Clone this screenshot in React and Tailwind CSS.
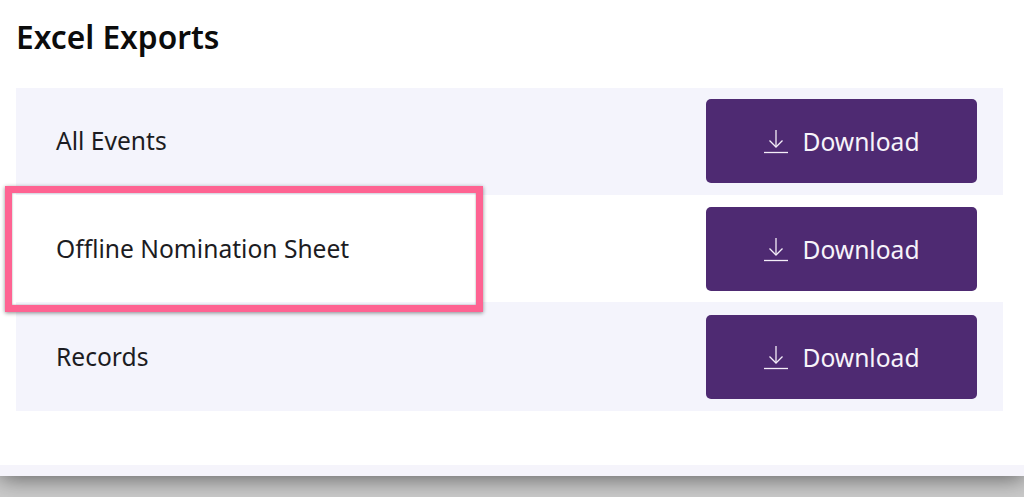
import React from 'react';

const rows = [
  { label: 'All Events', rowClass: 'bg-[#f4f4fc] pt-[11px] pb-3' },
  { label: 'Offline Nomination Sheet', rowClass: 'bg-white pt-3 pb-[11px]' },
  { label: 'Records', rowClass: 'bg-[#f4f4fc] pt-[13px] pb-3' },
];

const DownloadIcon = () => (
  <svg width="26" height="26" viewBox="0 0 26 26" fill="none" stroke="#f4eef8" strokeWidth="1.3" className="shrink-0">
    <path d="M13 2v17" />
    <path d="M6.5 12.5 13 19l6.5-6.5" />
    <path d="M1 24.5h24" />
  </svg>
);

const App = () => {
  return (
    <div className="relative h-[497px] w-[1024px] overflow-hidden bg-[#cbcbcb] font-['Noto_Sans',sans-serif]">
      {/* Page panel */}
      <div className="h-[476px] bg-white shadow-[0_2px_22px_rgba(0,0,0,0.55)] flex flex-col">
        <h1 className="pl-[16px] pt-[15px] h-[88px] text-[31.7px] leading-[44px] font-semibold text-[#0c0c0c]">Excel Exports</h1>

        <div className="ml-4 w-[987px]">
          {rows.map((row) => (
            <div key={row.label} className={`flex items-center justify-between pl-10 pr-[26px] ${row.rowClass}`}>
              <span className="text-[24.6px] text-[#1c1c22]">{row.label}</span>
              <button className="flex h-[84px] w-[271px] items-center justify-center gap-[13px] rounded-[5px] bg-[#4e2a72] text-[24.6px] text-[#f7f3fa]">
                <DownloadIcon />
                <span className="pt-0.5">Download</span>
              </button>
            </div>
          ))}
        </div>

        <div className="mt-auto h-[11px] bg-[#f5f4fb]" />
      </div>

      {/* Annotation highlight */}
      <div className="absolute left-[5px] top-[186px] h-[126px] w-[478px] border-[7px] border-[#fe6392] shadow-[0_1px_4px_rgba(0,0,0,0.45),inset_0_0_2px_rgba(0,0,0,0.4)]" />
    </div>
  );
};

export default App;
